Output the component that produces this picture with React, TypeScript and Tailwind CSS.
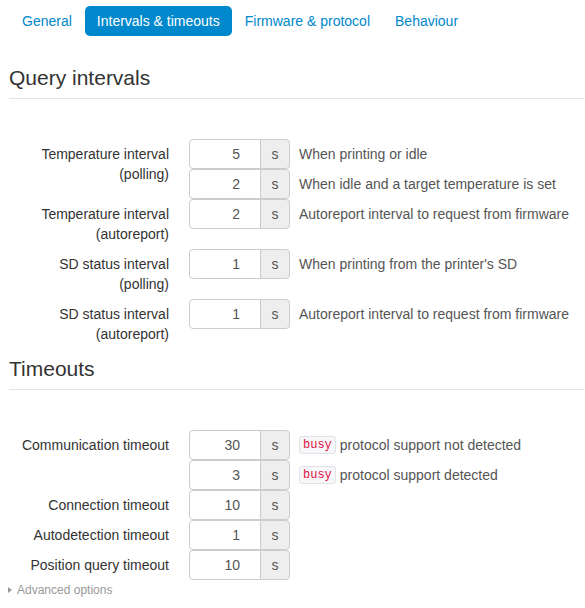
import React from 'react';

type Field = { value: number; help?: React.ReactNode };
type Group = { label: string[]; fields: Field[] };

const Busy = () => (
  <code className="mr-[4px] rounded-[3px] border border-[#e1e1e8] bg-[#f7f7f9] px-[3px] py-[1px] font-['Liberation_Mono',monospace] text-[12px] leading-[14px] text-[#dd1144]">
    busy
  </code>
);

const queryGroups: Group[] = [
  {
    label: ['Temperature interval', '(polling)'],
    fields: [
      { value: 5, help: 'When printing or idle' },
      { value: 2, help: 'When idle and a target temperature is set' },
    ],
  },
  {
    label: ['Temperature interval', '(autoreport)'],
    fields: [{ value: 2, help: 'Autoreport interval to request from firmware' }],
  },
  {
    label: ['SD status interval', '(polling)'],
    fields: [{ value: 1, help: "When printing from the printer's SD" }],
  },
  {
    label: ['SD status interval', '(autoreport)'],
    fields: [{ value: 1, help: 'Autoreport interval to request from firmware' }],
  },
];

const timeoutGroups: Group[] = [
  {
    label: ['Communication timeout'],
    fields: [
      { value: 30, help: <><Busy />protocol support not detected</> },
      { value: 3, help: <><Busy />protocol support detected</> },
    ],
  },
  { label: ['Connection timeout'], fields: [{ value: 10 }] },
  { label: ['Autodetection timeout'], fields: [{ value: 1 }] },
  { label: ['Position query timeout'], fields: [{ value: 10 }] },
];

function ControlGroup({ group }: { group: Group }) {
  return (
    <div className="flex">
      <label className="w-[160px] shrink-0 py-[5px] text-right text-[#333]">
        {group.label.map((l) => (
          <div key={l}>{l}</div>
        ))}
      </label>
      <div className="ml-[20px]">
        {group.fields.map((f, i) => (
          <div key={i} className="flex items-center">
            <div className="flex h-[30px]">
              <div className="flex w-[72px] items-center justify-end rounded-l-[4px] border border-[#ccc] bg-white pr-[20px] text-[#555]">
                {f.value}
              </div>
              <div className="-ml-px flex w-[30px] items-center justify-center rounded-r-[4px] border border-[#ccc] bg-[#eee] text-[#555]">
                s
              </div>
            </div>
            {f.help && <span className="ml-[9px] flex items-center text-[#555]">{f.help}</span>}
          </div>
        ))}
      </div>
    </div>
  );
}

function Legend({ children }: { children: React.ReactNode }) {
  return (
    <div className="mb-[40px] border-b border-[#e5e5e5] text-[21px] leading-[40px] text-[#333]">
      {children}
    </div>
  );
}

export default function App() {
  const tabs = ['General', 'Intervals & timeouts', 'Firmware & protocol', 'Behaviour'];
  return (
    <div className="min-h-screen bg-white pl-[9px] font-['Liberation_Sans',Arial,sans-serif] text-[14px] leading-[20px]">
      <ul className="mt-[6px] mb-[22px] flex gap-[1px] pl-px">
        {tabs.map((t) => (
          <li
            key={t}
            className={
              t === 'Intervals & timeouts'
                ? 'rounded-[5px] bg-[#0088cc] px-[12px] py-[8px] leading-[14px] text-white'
                : 'rounded-[5px] px-[12px] py-[8px] leading-[14px] text-[#0088cc]'
            }
          >
            {t}
          </li>
        ))}
      </ul>

      <Legend>Query intervals</Legend>
      <div className="flex flex-col">
        {queryGroups.map((g, i) => (
          <ControlGroup key={i} group={g} />
        ))}
      </div>

      <Legend>Timeouts</Legend>
      <div className="flex flex-col">
        {timeoutGroups.map((g, i) => (
          <ControlGroup key={i} group={g} />
        ))}
      </div>

      <div className="mt-[1px] flex items-center text-[12px] leading-[18px] text-[#999]">
        <span className="mr-[5px] ml-[-1px] h-0 w-0 border-y-[3.5px] border-l-[4px] border-y-transparent border-l-[#999]" />
        Advanced options
      </div>
    </div>
  );
}
